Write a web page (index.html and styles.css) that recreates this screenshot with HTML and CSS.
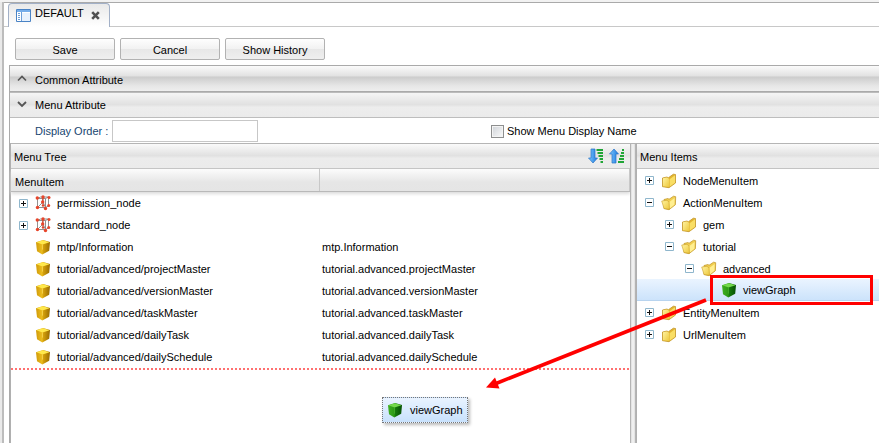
FILE: index.html
```html
<!DOCTYPE html>
<html lang="en">
<head>
<meta charset="utf-8">
<title>Menu Editor</title>
<link rel="stylesheet" href="styles.css">
</head>
<body>
<svg class="defs" width="0" height="0" aria-hidden="true">
  <defs>
    <linearGradient id="gold" x1="0" x2="1"><stop offset="0" stop-color="#d09a08"/><stop offset=".44" stop-color="#edbe20"/><stop offset=".5" stop-color="#d7a30c"/><stop offset="1" stop-color="#986b00"/></linearGradient>
    <linearGradient id="green" x1="0" x2="1"><stop offset="0" stop-color="#3fae22"/><stop offset=".45" stop-color="#2c9a16"/><stop offset=".5" stop-color="#167c0c"/><stop offset="1" stop-color="#075005"/></linearGradient>
    <linearGradient id="folder" x1="0" x2="1" y2="1"><stop offset="0" stop-color="#fff3a0"/><stop offset="1" stop-color="#edc83c"/></linearGradient>
    <linearGradient id="blue" x1="0" x2="1"><stop offset="0" stop-color="#7cc8ff"/><stop offset="1" stop-color="#1b78dc"/></linearGradient>
  </defs>
  <symbol id="cube" viewBox="0 0 16 16"><path fill="url(#gold)" d="M1 3.200 8 1l7 2-.8 8.800L7.300 15.500 2 12.200Z"/><path fill="#ffe84c" d="M1.500 3.300 8 1.300l6.500 1.900-7 2.300Z"/><path d="M7.500 5.600v5" stroke="#ffe26a" stroke-width=".6"/></symbol>
  <symbol id="cube-green" viewBox="0 0 16 16"><path fill="url(#green)" d="M1 3.200 8 1l7 2-.8 8.800L7.300 15.500 2 12.200Z"/><path fill="#73d94c" d="M1.500 3.300 8 1.300l6.500 1.900-7 2.300Z"/><path d="M7.500 5.600v6" stroke="#51b936" stroke-width=".6"/></symbol>
  <symbol id="node" viewBox="0 0 16 16"><path d="M2.500 3.500h8v9h-8ZM2.500 3.500l3-1.500h8v9l-3 1.500M10.500 3.500l3-1.500M8 3v8M2.500 12.500 8 7l2.500 5.500" fill="none" stroke="#858585" stroke-width=".9"/><path d="m8 2-.5 6" stroke="#d13a25"/><g fill="#e8452a"><circle cx="2.300" cy="3" r="1.700"/><circle cx="8" cy="2" r="1.700"/><circle cx="14" cy="2.500" r="1.500"/><circle cx="7.700" cy="7" r="1.700"/><circle cx="13.700" cy="10.500" r="1.500"/><circle cx="2.500" cy="12.500" r="1.700"/><circle cx="8" cy="10.500" r="1.200"/><circle cx="10.500" cy="13.500" r="1.700"/></g></symbol>
  <symbol id="folder-closed" viewBox="0 0 16 16"><path d="M1.500 5 6 4l1.300.8 5-3.600 2.200.3V10L8 14.700l-6.500-1Z" fill="#e2b42f" stroke="#bd8e1b" stroke-width=".7"/><path d="M2 5.300 6 4.500l2 1.300v8.300L2 13.200Z" fill="url(#folder)"/><path d="m8.600 6.200 5.400-4V9.700L8.600 13.800Z" fill="#f9de65"/></symbol>
  <symbol id="folder-open" viewBox="0 0 16 16"><path d="M3 4.500 7 3.500l1 .8 4.500-3.100 2.200.5-.3 8L8 14.700 3 13.500Z" fill="#f1ce50" stroke="#bd9020" stroke-width=".7"/><path d="M.7 6 6 5.300l2 1.500.5 7.500-5.500-.8Z" fill="url(#folder)" stroke="#cba02c" stroke-width=".6"/><path d="m8.600 6.700 5-3.700-.2 6.700-4.500 3.800Z" fill="#ffef91"/></symbol>
  <symbol id="plus" viewBox="0 0 9 9"><path d="M.5.500h8v8h-8Z" fill="#fff" stroke="#8fb6cc"/><path d="M2 4.500h5M4.500 2v5" stroke="#111"/></symbol>
  <symbol id="minus" viewBox="0 0 9 9"><path d="M.5.500h8v8h-8Z" fill="#fff" stroke="#8fb6cc"/><path d="M2 4.500h5" stroke="#111"/></symbol>
</svg>
<main class="window">
  <nav class="tabs">
    <div class="tab">
      <svg class="tab-icon" width="15" height="13" viewBox="0 0 15 13"><path d="M.5.500h14v12H.5Z" fill="#fff" stroke="#4a83c5"/><path d="M1 1h13v2H1Z" fill="#76aeea"/><path d="M6 4h8v8H6Z" fill="#e8f2fd"/><path d="M5.500 3v9" stroke="#6d9fd8"/><path d="M2 4.500h2M2 6.500h2M2 8.500h2M2 10.500h2" stroke="#6d9fd8"/></svg>
      <span class="tab-name">DEFAULT</span>
      <svg class="close" width="9" height="9" viewBox="0 0 9 9"><path d="m1.200 1.200 6.600 6.600m0-6.600-6.600 6.600" stroke="#505050" stroke-width="2.600"/></svg>
    </div>
  </nav>
  <div class="toolbar"><button>Save</button><button>Cancel</button><button>Show History</button></div>
  <div class="editor">
    <h2 class="section dark"><svg width="10" height="7" viewBox="0 0 10 7"><path d="m1 5.500 4-4 4 4" fill="none" stroke="#555" stroke-width="1.600"/></svg>Common Attribute</h2>
    <h2 class="section"><svg width="10" height="7" viewBox="0 0 10 7"><path d="m1 1 4 4 4-4" fill="none" stroke="#555" stroke-width="1.800"/></svg>Menu Attribute</h2>
    <div class="form"><label class="order">Display Order :<input type="text"></label><label class="show"><span class="checkbox"></span>Show Menu Display Name</label></div>
    <div class="panels">
      <section class="tree">
        <header class="bar">Menu Tree
          <span class="sort">
            <svg width="16" height="16" viewBox="0 0 16 16"><path d="M3 1h4v9h2.500L5 15 .5 10H3Z" fill="url(#blue)" stroke="#2873c5" stroke-width=".7"/><path d="M8.500 2h6.500M9.500 5H15M10.500 8H15M11.500 11H15M12.500 14H15" stroke="#20a536" stroke-width="1.800"/></svg>
            <svg width="16" height="16" viewBox="0 0 16 16"><path d="M3 15h4V6h2.500L5 1 .5 6H3Z" fill="url(#blue)" stroke="#2873c5" stroke-width=".7"/><path d="M13 2h2M12 5h3M11 8h4M10 11h5M9 14h6" stroke="#20a536" stroke-width="1.800"/></svg>
          </span>
        </header>
        <div class="columns"><span>MenuItem</span><span></span></div>
        <div class="rows">
          <div class="row"><svg class="toggle"><use href="#plus"/></svg><svg class="icon"><use href="#node"/></svg><span class="name">permission_node</span></div>
          <div class="row"><svg class="toggle"><use href="#plus"/></svg><svg class="icon"><use href="#node"/></svg><span class="name">standard_node</span></div>
          <div class="row"><i class="toggle"></i><svg class="icon"><use href="#cube"/></svg><span class="name">mtp/Information</span><span>mtp.Information</span></div>
          <div class="row"><i class="toggle"></i><svg class="icon"><use href="#cube"/></svg><span class="name">tutorial/advanced/projectMaster</span><span>tutorial.advanced.projectMaster</span></div>
          <div class="row"><i class="toggle"></i><svg class="icon"><use href="#cube"/></svg><span class="name">tutorial/advanced/versionMaster</span><span>tutorial.advanced.versionMaster</span></div>
          <div class="row"><i class="toggle"></i><svg class="icon"><use href="#cube"/></svg><span class="name">tutorial/advanced/taskMaster</span><span>tutorial.advanced.taskMaster</span></div>
          <div class="row"><i class="toggle"></i><svg class="icon"><use href="#cube"/></svg><span class="name">tutorial/advanced/dailyTask</span><span>tutorial.advanced.dailyTask</span></div>
          <div class="row"><i class="toggle"></i><svg class="icon"><use href="#cube"/></svg><span class="name">tutorial/advanced/dailySchedule</span><span>tutorial.advanced.dailySchedule</span></div>
        </div>
        <div class="dropline"></div>
      </section>
      <div class="splitter"></div>
      <section class="items">
        <header class="bar">Menu Items</header>
        <div class="item"><svg class="toggle"><use href="#plus"/></svg><svg class="icon"><use href="#folder-closed"/></svg>NodeMenuItem</div>
        <div class="item"><svg class="toggle"><use href="#minus"/></svg><svg class="icon"><use href="#folder-open"/></svg>ActionMenuItem</div>
        <div class="item level1"><svg class="toggle"><use href="#plus"/></svg><svg class="icon"><use href="#folder-closed"/></svg>gem</div>
        <div class="item level1"><svg class="toggle"><use href="#minus"/></svg><svg class="icon"><use href="#folder-open"/></svg>tutorial</div>
        <div class="item level2"><svg class="toggle"><use href="#minus"/></svg><svg class="icon"><use href="#folder-open"/></svg>advanced</div>
        <div class="item level3 selected"><i class="toggle"></i><svg class="icon"><use href="#cube-green"/></svg>viewGraph</div>
        <div class="item"><svg class="toggle"><use href="#plus"/></svg><svg class="icon"><use href="#folder-closed"/></svg>EntityMenuItem</div>
        <div class="item"><svg class="toggle"><use href="#plus"/></svg><svg class="icon"><use href="#folder-closed"/></svg>UrlMenuItem</div>
      </section>
    </div>
  </div>
</main>
<div class="drag"><svg class="icon"><use href="#cube-green"/></svg>viewGraph</div>
<svg class="annotation" width="879" height="443" viewBox="0 0 879 443"><path d="M711.500 276.500h160v27h-160Z" fill="none" stroke="red" stroke-width="3"/><path d="M706 300 496 383.500" stroke="red" stroke-width="3.600"/><path d="m486 387.500 9-10 4.500 11Z" fill="red"/></svg>
</body>
</html>
```
FILE: styles.css
```css
* { box-sizing: border-box; }
body { margin: 0; width: 879px; height: 443px; overflow: hidden; position: relative; background: #fff; color: #000; font: 11px/14px "Liberation Sans", Arial, sans-serif; }
.defs { position: absolute; }
.window { height: 443px; border-top: 2px solid #f2f2f2; background: linear-gradient(90deg, #e9e9e9 0 2px, #bcbcbc 2px 4px, #fff 4px); }
.tabs { height: 25px; margin-left: 4px; padding-left: 4px; border-top: 1px solid #aaa; border-bottom: 1px solid #c8c8c8; }
.tab { display: flex; align-items: center; width: 102px; height: 24px; padding: 0 0 2px 7px; border: 1px solid #a2b0c7; border-bottom: 0; border-radius: 4px 4px 0 0; background: linear-gradient(#e9e9e9, #fff); }
.tab-icon { margin-top: 2px; margin-right: 4px; }
.tab-name { margin-top: -4px; }
.close { margin: 1px 0 0 7px; }
.toolbar { display: flex; gap: 5px; height: 38px; padding: 11px 0 0 15px; }
button { width: 100px; height: 22px; padding: 2px 0 0; border: 1px solid #b2b2b2; border-radius: 2px; background: linear-gradient(#fefefe, #f2f2f2 49%, #e7e7e7 50%, #efefef); color: #000; font: inherit; }
.editor { height: 378px; margin-left: 9px; border-left: 1px solid #aaa; }
.section { display: flex; align-items: center; gap: 8px; height: 26px; margin: 0; padding: 0 0 0 7px; border-top: 1px solid #bbb; border-bottom: 1px solid #bdbdbd; background: linear-gradient(#f5f5f5, #e1e1e1 48%, #ededed 60%, #ebebeb); font-size: 11px; font-weight: normal; }
.section svg { margin-top: -2px; }
.section.dark { height: 27px; padding-top: 2px; border-color: #aaa; background: linear-gradient(#fbfbfb, #e3e3e3 38%, #cdcdcd 45%, #e7e7e7 80%, #eee); }
.form { display: flex; height: 25px; padding: 1px 0 0 25px; }
.order { display: flex; align-items: center; width: 456px; color: #17456f; }
input { width: 146px; height: 22px; margin-left: 4px; padding: 2px; border: 1px solid #c7c7c7; background: #fff; }
.show { display: flex; align-items: center; gap: 3px; }
.checkbox { width: 13px; height: 13px; border: 1px solid #8e8f8f; background: linear-gradient(135deg, #cfd3d8, #fafafa); box-shadow: inset 0 0 0 1px #f4f4f4; }
.panels { display: flex; height: 300px; }
.tree { width: 620px; border-left: 1px solid #b0b0b0; }
.bar { display: flex; align-items: center; height: 26px; padding: 2px 3px 0; border-top: 1px solid #b5b5b5; border-bottom: 1px solid #c3c3c3; background: linear-gradient(#fafafa, #e1e1e1 48%, #ececec 60%, #ebebeb); }
.sort { display: flex; gap: 5px; margin: -2px 2px 0 auto; }
.columns { display: grid; grid-template-columns: 309px 1fr; height: 23px; border-bottom: 1px solid #b9b9b9; box-shadow: 0 2px 3px #ddd; background: linear-gradient(#fcfcfc, #e6e6e6 60%, #e5e5e5); }
.columns span { padding: 6px 0 0 4px; border-right: 1px solid #c8c8c8; }
.row { display: flex; align-items: center; height: 22px; padding-left: 8px; }
.toggle { width: 9px; height: 9px; flex: none; }
.icon { width: 16px; height: 16px; flex: none; margin: 0 6px 0 7px; }
.name { width: 265px; }
.dropline { height: 2px; background: repeating-linear-gradient(90deg, #ff7070 0 2px, #fff 2px 4px); }
.splitter { width: 6px; border: solid #b4b4b4; border-width: 1px 1px 0; background: linear-gradient(90deg, #ddd, #f5f5f5, #ddd); }
.items { flex: 1; border-left: 1px solid #b0b0b0; }
.item { display: flex; align-items: center; height: 22px; padding: 1px 0 0 8px; }
.item.level1 { padding-left: 28px; }
.item.level2 { padding-left: 48px; }
.item.level3 { padding-left: 68px; }
.selected { border-bottom: 1px solid #b8d4ef; background: linear-gradient(#eaf4ff, #cce3fb); }
.drag { position: absolute; left: 382px; top: 397px; width: 86px; height: 26px; display: flex; align-items: center; border: 1px dotted #777; background: linear-gradient(#e9f3ff, #c8e1fc); box-shadow: 2px 2px 3px #bbb; }
.drag .icon { margin: 0 7px 0 4px; }
.annotation { position: absolute; inset: 0; }
```
